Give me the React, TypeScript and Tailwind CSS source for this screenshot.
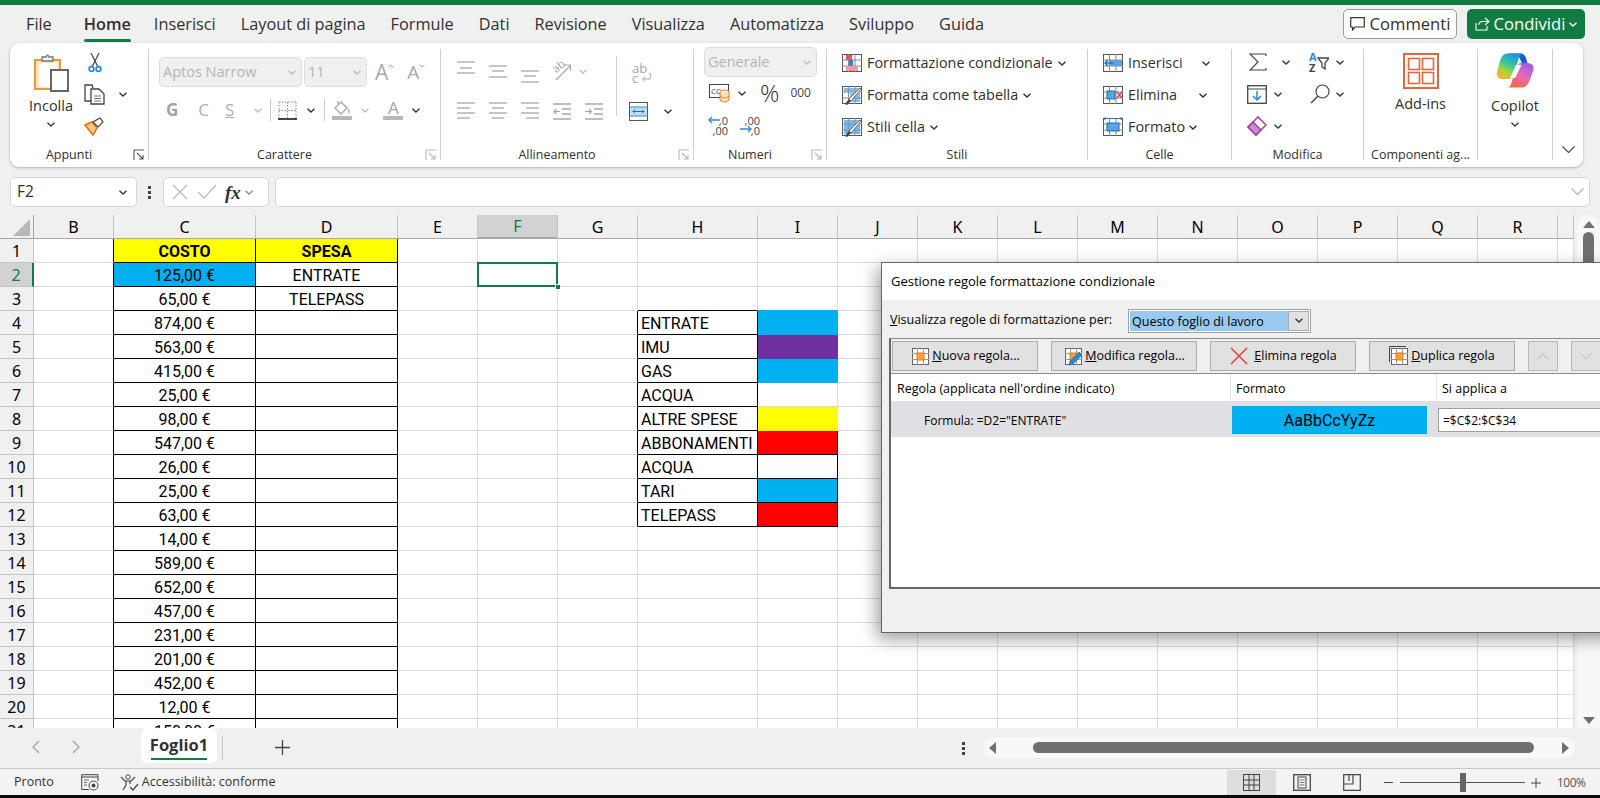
import type { ReactNode } from "react";

const columns = ["B", "C", "D", "E", "F", "G", "H", "I", "J", "K", "L", "M", "N", "O", "P", "Q", "R", ""];
const costs = ["125,00 €", "65,00 €", "874,00 €", "563,00 €", "415,00 €", "25,00 €", "98,00 €", "547,00 €", "26,00 €", "25,00 €", "63,00 €", "14,00 €", "589,00 €", "652,00 €", "457,00 €", "231,00 €", "201,00 €", "452,00 €", "12,00 €", "150,00 €"];
const legend = ["ENTRATE", "IMU", "GAS", "ACQUA", "ALTRE SPESE", "ABBONAMENTI", "ACQUA", "TARI", "TELEPASS"];
const legendFill = ["bg-[#00b0f0] border-[#00b0f0]", "bg-[#7030a0] border-[#7030a0]", "bg-[#00b0f0] border-[#00b0f0]", "bg-white border-[#dcdcdc]", "bg-[#ffff00] border-[#ffff00]", "bg-[#ff0000]", "bg-white", "bg-[#00b0f0]", "bg-[#ff0000]"];

function Chev({ className = "", color = "#333" }: { className?: string; color?: string }) {
  return (
    <svg width="8" height="5" viewBox="0 0 8 5" className={`shrink-0 ${className}`}>
      <path d="M0.5 0.7 L4 4 L7.5 0.7" fill="none" stroke={color} strokeWidth="1.3" />
    </svg>
  );
}

function Group({ width, label, launcher, children, dim }: { width: string; label?: string; launcher?: boolean; children: ReactNode; dim?: boolean }) {
  return (
    <div className={`flex h-full shrink-0 flex-col ${width}`}>
      <div className="h-[103px]">{children}</div>
      <div className={`relative h-[18px] text-center text-[12.5px] leading-[18px] text-[#303030] ${launcher ? "pr-[20px]" : ""}`}>
        {label}
        {launcher && (
          <svg width="12" height="12" viewBox="0 0 12 12" className="absolute right-[3px] top-[3px]">
            <path d="M1 11 V1 H11 M1 1 M4 4 L10 10 M10 6 V10 H6" fill="none" stroke={dim ? "#b8b8b8" : "#555"} strokeWidth="1.1" />
          </svg>
        )}
      </div>
    </div>
  );
}

function Sep() {
  return <div className="my-[6px] mb-[7px] w-px shrink-0 bg-[#d0d0d0]" />;
}

function Combo({ text, width }: { text: string; width: string }) {
  return (
    <div className={`flex h-[30px] items-center justify-between rounded-[5px] border border-[#dcdcdc] bg-[#f0f0f0] pl-[3px] pr-[5px] text-[14.5px] text-[#b4b4b4] ${width}`}>
      <span>{text}</span>
      <Chev color="#bdbdbd" />
    </div>
  );
}

function PasteIcon() {
  return (
    <svg width="35" height="39" viewBox="0 0 35 39">
      <rect x="1" y="7" width="25" height="29" fill="#fde6b8" stroke="#e8973a" strokeWidth="2" />
      <rect x="5" y="10" width="18" height="24" fill="#fff" />
      <path d="M8 8 V4 H12 Q13.5 0.5 15 4 H19 V8 Z" fill="#f4f4f4" stroke="#777" strokeWidth="1.3" />
      <rect x="17" y="17" width="17" height="21" fill="#fff" stroke="#666" strokeWidth="2" />
    </svg>
  );
}

function ScissorsIcon() {
  return (
    <svg width="14" height="21" viewBox="0 0 14 21">
      <path d="M3 1 L10 15 M11 1 L4 15" stroke="#444" strokeWidth="1.2" fill="none" />
      <circle cx="3.5" cy="17" r="2.4" fill="none" stroke="#2b88d8" strokeWidth="1.7" />
      <circle cx="10.5" cy="17" r="2.4" fill="none" stroke="#2b88d8" strokeWidth="1.7" />
    </svg>
  );
}

function CopyIcon() {
  return (
    <svg width="21" height="21" viewBox="0 0 21 21">
      <path d="M8 17 H1 V1 H8 L9 4" fill="#fff" stroke="#444" strokeWidth="1.3" />
      <path d="M7 5 H15 L20 10 V20 H7 Z" fill="#fff" stroke="#444" strokeWidth="1.3" />
      <path d="M10 12 H17 M10 14.5 H17 M10 17 H17" stroke="#777" />
    </svg>
  );
}

function BrushIcon() {
  return (
    <svg width="21" height="20" viewBox="0 0 21 20">
      <path d="M1 9 L9 19 L13 12 L8 6 Z" fill="#f9c68d" stroke="#e07a10" strokeWidth="1.6" />
      <path d="M9 6 L14 11 L19 6 L16 2 Z" fill="#fff" stroke="#444" strokeWidth="1.2" />
    </svg>
  );
}

function BorderIcon() {
  return (
    <svg width="19" height="19" viewBox="0 0 19 19">
      <path d="M1 1 H18 M1 9.5 H18 M1 1 V17 M9.5 1 V17 M18 1 V17" stroke="#8a8a8a" strokeDasharray="1.5 1.5" fill="none" />
      <path d="M0 18 H19" stroke="#444" strokeWidth="2" />
    </svg>
  );
}

function FillIcon() {
  return (
    <svg width="20" height="20" viewBox="0 0 20 20">
      <path d="M3 8 L9 2 L15 8 L9 14 Z" fill="#fff" stroke="#a8a8a8" strokeWidth="1.3" />
      <path d="M6 4 V1 M16 9 Q18 12 16.5 13" stroke="#a8a8a8" fill="none" strokeWidth="1.3" />
      <rect x="0" y="16" width="20" height="4" fill="#b8b8b8" />
    </svg>
  );
}

function FontColorIcon() {
  return (
    <div className="flex h-[20px] w-[20px] flex-col items-center">
      <span className="text-[17px] leading-[16px] text-[#a4a4a4]">A</span>
      <span className="h-[4px] w-full bg-[#b8b8b8]" />
    </div>
  );
}

function AlignIcon({ lines, short }: { lines: number[]; short?: "center" | "right" | "left" }) {
  return (
    <svg width="18" height="24" viewBox="0 0 18 24">
      {lines.map((y, i) => {
        let x1 = 0;
        let x2 = 18;
        if (short && i % 2 === 1) {
          if (short === "center") { x1 = 3; x2 = 15; }
          if (short === "right") { x1 = 5; }
          if (short === "left") { x2 = 13; }
        }
        return <path key={y} d={`M${x1} ${y} H${x2}`} stroke="#a8a8a8" strokeWidth="1.3" />;
      })}
    </svg>
  );
}

function IndentIcon({ right }: { right?: boolean }) {
  return (
    <svg width="18" height="18" viewBox="0 0 18 18">
      <path d="M0 1 H18 M0 16 H18 M9 6 H18 M9 11 H18" stroke="#a8a8a8" strokeWidth="1.3" />
      <path d={right ? "M0 8.5 H6 M4 6 L6.5 8.5 L4 11" : "M7 8.5 H1 M3.5 6 L1 8.5 L3.5 11"} stroke="#a8a8a8" fill="none" strokeWidth="1.2" />
    </svg>
  );
}

function OrientIcon() {
  return (
    <svg width="20" height="22" viewBox="0 0 20 22">
      <text x="1" y="11" fontSize="11" fill="#a8a8a8" transform="rotate(-40 6 8)">ab</text>
      <path d="M4 20 L18 6 M12 5 H18.5 V11" stroke="#a8a8a8" fill="none" strokeWidth="1.2" />
    </svg>
  );
}

function WrapIcon() {
  return (
    <div className="relative h-[20px] w-[20px] text-[13px] leading-[10px] text-[#a8a8a8]">
      ab
      <br />c
      <svg width="12" height="10" viewBox="0 0 12 10" className="absolute bottom-0 right-0">
        <path d="M8 0 H10 Q12 2 10 6 H3 M5 3.5 L2.5 6 L5 8.5" stroke="#a8a8a8" fill="none" />
      </svg>
    </div>
  );
}

function MergeIcon() {
  return (
    <svg width="19" height="19" viewBox="0 0 19 19">
      <rect x="0.5" y="0.5" width="18" height="18" fill="#fff" stroke="#555" />
      <rect x="1" y="5" width="17" height="9" fill="#bfe0f5" />
      <path d="M0 5 H19 M0 14 H19" stroke="#2b88d8" />
      <path d="M4 9.5 H15 M6 7.5 L4 9.5 L6 11.5 M13 7.5 L15 9.5 L13 11.5" stroke="#1a6fb0" fill="none" />
    </svg>
  );
}

function AccountingIcon() {
  return (
    <svg width="21" height="20" viewBox="0 0 21 20">
      <rect x="0.5" y="1.5" width="19" height="13" fill="#fff" stroke="#444" />
      <text x="2" y="11" fontSize="8" fill="#444">CC</text>
      <ellipse cx="15.5" cy="9" rx="4.5" ry="2" fill="#fff" stroke="#e07a10" />
      <path d="M11 9 V17 Q15.5 21 20 17 V9 M11 13 Q15.5 17 20 13" fill="#fbe3c4" stroke="#e07a10" />
    </svg>
  );
}

function DecimalIcon({ more }: { more?: boolean }) {
  return (
    <div className="relative h-[20px] w-[20px] text-[11px] leading-[10px] text-[#444]">
      <div className="text-right">{more ? ",00" : ",0"}</div>
      <div className="text-right">{more ? ",0" : ",00"}</div>
      <svg width="12" height="8" viewBox="0 0 12 8" className={`absolute left-0 ${more ? "top-[9px]" : "top-0"}`}>
        <path d={more ? "M0 4 H11 M8 1 L11 4 L8 7" : "M12 4 H1 M4 1 L1 4 L4 7"} stroke="#2b88d8" fill="none" strokeWidth="1.3" />
      </svg>
    </div>
  );
}

function GridBase({ children }: { children: ReactNode }) {
  return (
    <svg width="20" height="20" viewBox="0 0 20 20" className="shrink-0">
      <rect x="0.5" y="1.5" width="19" height="17" fill="#fff" stroke="#555" />
      <path d="M0 7 H20 M0 13 H20 M6.5 1 V19 M13 1 V19" stroke="#8a8a8a" />
      {children}
    </svg>
  );
}

function CondIcon() {
  return (
    <GridBase>
      <rect x="4" y="2" width="6" height="5" fill="#e8505b" />
      <rect x="7" y="7" width="4" height="6" fill="#2b88d8" />
      <rect x="4" y="13" width="12" height="5" fill="#f59aa0" />
    </GridBase>
  );
}

function TableIcon({ solid }: { solid?: boolean }) {
  return (
    <GridBase>
      <path d={solid ? "M2 3 H18 V17 H2 Z" : "M2 3 H18 V7 H2 Z M8 8 H18 V17 H8 Z"} fill="#5ba4e0" fillOpacity={solid ? 0.8 : 0.75} />
      <path d="M3 19 L7 14 L9 16 L5 20 Z" fill="#444" />
      <path d="M7 14 L18 3 L19 4 L9 16 Z" fill="#fff" stroke="#555" strokeWidth="0.8" />
    </GridBase>
  );
}

function CellsIcon({ kind }: { kind: "ins" | "del" | "fmt" }) {
  return (
    <GridBase>
      {kind === "ins" && <rect x="7" y="7" width="12" height="6" fill="#5ba4e0" />}
      {kind === "ins" && <path d="M10 10 H2 M5 7 L2 10 L5 13" stroke="#1a78c2" fill="none" strokeWidth="1.5" />}
      {kind === "del" && <rect x="4" y="6" width="8" height="8" fill="#5ba4e0" stroke="#1a6fb0" />}
      {kind === "del" && <path d="M14 7 L19 13 M19 7 L14 13" stroke="#e8404a" strokeWidth="1.5" />}
      {kind === "fmt" && <rect x="4" y="6" width="12" height="8" fill="#5ba4e0" stroke="#1a6fb0" />}
      {kind === "fmt" && <path d="M2 0 V3 M2 1.5 H18 M18 0 V3" stroke="#1a78c2" />}
    </GridBase>
  );
}

function SortIcon() {
  return (
    <svg width="20" height="21" viewBox="0 0 20 21">
      <text x="0" y="9" fontSize="11" fontWeight="700" fill="#2b88d8">A</text>
      <text x="0" y="20" fontSize="11" fontWeight="700" fill="#444">Z</text>
      <path d="M9 6 H20 L16 11 V17 L13 15 V11 Z" fill="#fff" stroke="#444" strokeWidth="1.3" />
    </svg>
  );
}

function ClearIcon() {
  return (
    <svg width="20" height="20" viewBox="0 0 20 20">
      <path d="M1 11 L11 1 L19 9 L9 19 Z" fill="#fff" stroke="#a23ca8" strokeWidth="1.5" />
      <path d="M1 11 L6 6 L14 14 L9 19 Z" fill="#c98ccc" stroke="#a23ca8" strokeWidth="1.5" />
    </svg>
  );
}

function AddInsIcon() {
  return (
    <svg width="36" height="36" viewBox="0 0 36 36">
      <rect x="1" y="1" width="34" height="34" fill="none" stroke="#e2673b" strokeWidth="2" />
      <rect x="5.5" y="5.5" width="11" height="11" fill="none" stroke="#e2673b" strokeWidth="1.6" />
      <rect x="19.5" y="5.5" width="11" height="11" fill="none" stroke="#e2673b" strokeWidth="1.6" />
      <rect x="5.5" y="19.5" width="11" height="11" fill="none" stroke="#e2673b" strokeWidth="1.6" />
      <rect x="19.5" y="19.5" width="11" height="11" fill="none" stroke="#e2673b" strokeWidth="1.6" />
    </svg>
  );
}

function CopilotIcon() {
  return (
    <svg width="38" height="37" viewBox="0 0 40 38">
      <defs>
        <linearGradient id="cpA" x1="0.7" y1="0" x2="0.2" y2="1">
          <stop offset="0" stopColor="#1f8fe8" />
          <stop offset="0.4" stopColor="#2fc6a0" />
          <stop offset="0.7" stopColor="#a6d63a" />
          <stop offset="1" stopColor="#fbb32e" />
        </linearGradient>
        <linearGradient id="cpB" x1="0.8" y1="0" x2="0.3" y2="1">
          <stop offset="0" stopColor="#9a5be8" />
          <stop offset="0.5" stopColor="#e86ab8" />
          <stop offset="1" stopColor="#f8683c" />
        </linearGradient>
      </defs>
      <path d="M12 1 H26 C30 1 32 5 33 11 L28 13 L24 4 Z" fill="#1560c8" />
      <path d="M12 1 C7 1 5 6 3.5 11 L1 21 C0 26 3 28 7 28 H13 C16 28 18 26 19 23 L24 6 C25 3 26 1 28 1 Z" fill="url(#cpA)" />
      <path d="M27 37 C32 37 35 32 36.5 27 L39.5 18 C40 13 37 11 32 11 H27 C24 11 22 13 21 16 L16 33 C15 36 14 37 12 37 Z" fill="url(#cpB)" />
      <path d="M21 13 H27 L20 27 H15 Z" fill="#fff" />
    </svg>
  );
}

function SheetGrid() {
  const rows = Array.from({ length: 21 }, (_, i) => i + 1);
  return (
    <div className="grid w-[1574px] shrink-0 grid-cols-[34px_80px_142px_142px_80px_80px_80px_120px_80px_80px_80px_80px_80px_80px_80px_80px_80px_80px_16px] grid-rows-[24px_repeat(21,24px)] overflow-hidden bg-white text-[16px] leading-[26px] text-black [font-family:Roboto,sans-serif]">
      <div className="relative border-b border-r border-[#a8a8a8] bg-[#f0f0f0]">
        <div className="absolute bottom-[2px] right-[3px] h-0 w-0 border-b-[17px] border-l-[17px] border-b-[#b8b8b8] border-l-transparent" />
      </div>
      {columns.map((c) => (
        <div
          key={c || "S"}
          className={`flex items-center justify-center border-b border-r border-b-[#a8a8a8] border-r-[#c4c4c4] text-[16px] [font-family:'Noto_Sans',sans-serif] ${
            c === "F" ? "border-b-2 border-b-[#107c41] bg-[#d2d2d2] text-[#107c41]" : "bg-[#f0f0f0]"
          }`}
        >
          {c}
        </div>
      ))}
      {rows.map((r) => (
        <Row key={r} r={r} />
      ))}
    </div>
  );
}

function Row({ r }: { r: number }) {
  const grid = "border-[#dcdcdc]";
  const black = "border-black";
  return (
    <>
      <div
        className={`flex items-center justify-center border-b border-r text-[16px] [font-family:'Noto_Sans',sans-serif] ${
          r === 2 ? "border-b-[#c4c4c4] border-r-2 border-r-[#107c41] bg-[#d2d2d2] text-[#107c41]" : "border-[#c4c4c4] bg-[#f0f0f0]"
        }`}
      >
        {r}
      </div>
      {columns.map((c) => {
        const key = `${c || "S"}${r}`;
        const inLegend = r >= 4 && r <= 12;
        if (c === "B") {
          return <div key={key} className="border-b border-r border-b-[#dcdcdc] border-r-black" />;
        }
        if (c === "C") {
          return (
            <div key={key} className={`overflow-hidden border-b border-r border-black text-center ${r === 1 ? "bg-[#ffff00] font-bold" : r === 2 ? "bg-[#00b0f0]" : ""}`}>
              {r === 1 ? "COSTO" : costs[r - 2]}
            </div>
          );
        }
        if (c === "D") {
          return (
            <div key={key} className={`overflow-hidden border-b border-r border-black text-center ${r === 1 ? "bg-[#ffff00] font-bold" : ""}`}>
              {r === 1 ? "SPESA" : r === 2 ? "ENTRATE" : r === 3 ? "TELEPASS" : ""}
            </div>
          );
        }
        if (c === "F" && r === 2) {
          return (
            <div key={key} className={`relative border-b border-r ${grid}`}>
              <div className="absolute -inset-x-px -inset-y-px z-10 border-2 border-[#107c41]" />
              <div className="absolute bottom-[-4px] right-[-4px] z-10 h-[6px] w-[6px] border border-white bg-[#107c41]" />
            </div>
          );
        }
        if (c === "G") {
          return <div key={key} className={`border-b ${grid} border-r ${inLegend ? "border-r-black" : "border-r-[#dcdcdc]"}`} />;
        }
        if (c === "H") {
          if (inLegend) {
            return (
              <div key={key} className={`overflow-hidden border-b border-r ${black} pl-[3px]`}>
                {legend[r - 4]}
              </div>
            );
          }
          return <div key={key} className={`border-b border-r ${r === 3 ? "border-b-black border-r-[#dcdcdc]" : grid}`} />;
        }
        if (c === "I") {
          if (inLegend) {
            const fill = legendFill[r - 4];
            if (r <= 8) return <div key={key} className={`border-b border-r ${fill}`} />;
            return <div key={key} className={`border-b border-r ${black} ${fill}`} />;
          }
          return <div key={key} className={`border-b border-r ${r === 3 ? "border-b-[#00b0f0] border-r-[#dcdcdc]" : grid}`} />;
        }
        return <div key={key} className={`border-b border-r ${grid}`} />;
      })}
    </>
  );
}

function DlgButton({ icon, children, width }: { icon: ReactNode; children: ReactNode; width: string }) {
  return (
    <div className={`flex h-[30px] shrink-0 items-center justify-center gap-[2px] border border-[#adadad] bg-[#e1e1e1] text-[12.5px] text-black ${width}`}>
      {icon}
      <span className="pt-px">{children}</span>
    </div>
  );
}

function RuleIcon({ kind }: { kind: "new" | "edit" | "dup" }) {
  return (
    <svg width="20" height="20" viewBox="0 0 20 20" className="shrink-0">
      {kind === "dup" && <path d="M0.5 16 V0.5 H17" fill="none" stroke="#444" />}
      <rect x="2.5" y="2.5" width="16" height="16" fill="#fff" stroke="#666" />
      <path d="M2 7.5 H19 M2 13.5 H19 M7.5 2 V19 M13.5 2 V19" stroke="#9a9a9a" />
      <rect x="7" y="7" width="7" height="7" fill="#f7a23b" stroke="#e07a10" />
      {kind === "edit" && <path d="M6 19 L7 15 L16 6 L19 9 L10 18 Z" fill="#2b88d8" stroke="#1a6fb0" strokeWidth="0.7" />}
    </svg>
  );
}

function Dialog() {
  return (
    <div className="absolute left-[881px] top-[47px] z-20 h-[371px] w-[760px] border border-r-0 border-[#666] bg-[#f0f0f0] text-[12.5px] text-black shadow-[-4px_6px_16px_rgba(0,0,0,0.38)] [font-family:'Open_Sans',sans-serif]">
      <div className="flex h-[37px] items-center bg-white pl-[9px] text-[13px]">Gestione regole formattazione condizionale</div>
      <div className="flex h-[38px] items-center pl-[8px]">
        <span className="w-[238px] pt-[2px]">
          <u>V</u>isualizza regole di formattazione per:
        </span>
        <div className="mt-[3px] flex h-[24px] w-[183px] items-stretch border border-[#a0a0a0] bg-white p-px">
          <div className="flex-1 bg-[#99c9ef] pl-[2px] leading-[22px]">Questo foglio di lavoro</div>
          <div className="flex w-[21px] items-center justify-center border border-[#adadad] bg-[#e1e1e1]">
            <Chev />
          </div>
        </div>
      </div>
      <div className="ml-[7px] h-[251px] border-b-2 border-l-2 border-t border-b-[#666] border-l-[#666] border-t-[#8c8c8c]">
        <div className="flex h-[34px] items-center gap-[13px] pl-[1px]">
          <DlgButton width="w-[146px]" icon={<RuleIcon kind="new" />}>
            <u>N</u>uova regola...
          </DlgButton>
          <DlgButton width="w-[146px]" icon={<RuleIcon kind="edit" />}>
            <u>M</u>odifica regola...
          </DlgButton>
          <DlgButton
            width="w-[146px]"
            icon={
              <svg width="20" height="20" viewBox="0 0 20 20" className="mr-[3px] shrink-0">
                <path d="M2 2 L18 18 M18 2 L2 18" stroke="#e8404a" strokeWidth="1.6" />
              </svg>
            }
          >
            <u>E</u>limina regola
          </DlgButton>
          <DlgButton width="w-[146px]" icon={<RuleIcon kind="dup" />}>
            <u>D</u>uplica regola
          </DlgButton>
          <div className="flex h-[30px] w-[30px] shrink-0 items-center justify-center border border-[#b8b8b8] bg-[#e1e1e1]">
            <svg width="12" height="7" viewBox="0 0 12 7">
              <path d="M0.5 6.5 L6 1 L11.5 6.5" fill="none" stroke="#b4b4b4" />
            </svg>
          </div>
          <div className="flex h-[30px] w-[30px] shrink-0 items-center justify-center border border-[#b8b8b8] bg-[#e1e1e1]">
            <svg width="12" height="7" viewBox="0 0 12 7">
              <path d="M0.5 0.5 L6 6 L11.5 0.5" fill="none" stroke="#b4b4b4" />
            </svg>
          </div>
        </div>
        <div className="h-[214px] border-t border-[#8c8c8c] bg-white">
          <div className="flex h-[27px] items-center">
            <div className="flex h-full w-[340px] items-center border-r border-[#e4e4e4] pl-[6px] pt-[3px]">Regola (applicata nell'ordine indicato)</div>
            <div className="flex h-full w-[206px] items-center border-r border-[#e4e4e4] pl-[5px] pt-[3px]">Formato</div>
            <div className="pl-[5px] pt-[3px]">Si applica a</div>
          </div>
          <div className="flex h-[36px] items-center bg-[#dfdfe4]">
            <div className="w-[341px] pl-[33px] pt-[3px] text-[12px]">Formula: =D2="ENTRATE"</div>
            <div className="mt-px flex h-[28px] w-[195px] items-center justify-center bg-[#00b0f0] pt-[2px] text-[16px] [font-family:Roboto,sans-serif]">AaBbCcYyZz</div>
            <div className="ml-[11px] mt-px flex h-[24px] flex-1 items-center border border-[#a0a0a0] bg-white pl-[4px] pt-[2px] text-[12px]">=$C$2:$C$34</div>
          </div>
        </div>
      </div>
    </div>
  );
}

export default function App() {
  return (
    <div className="flex h-[798px] w-[1600px] flex-col overflow-hidden bg-[#f0f0f0] text-[#303030] [font-family:'Open_Sans',sans-serif]">
      <div className="h-[5px] shrink-0 bg-[#107c41]" />

      {/* tab row */}
      <div className="flex h-[38px] shrink-0 items-center pl-[26px] text-[16.3px]">
        <span className="mr-[32px]">File</span>
        <span className="relative mr-[23px] font-semibold">
          Home
          <span className="absolute -bottom-[6px] left-0 h-[3px] w-full rounded-sm bg-[#107c41]" />
        </span>
        <div className="flex gap-[25px]">
          <span>Inserisci</span>
          <span>Layout di pagina</span>
          <span>Formule</span>
          <span>Dati</span>
          <span>Revisione</span>
          <span>Visualizza</span>
          <span>Automatizza</span>
          <span>Sviluppo</span>
          <span>Guida</span>
        </div>
        <div className="ml-auto flex gap-[10px] pr-[15px]">
          <div className="flex h-[30px] w-[114px] items-center justify-center gap-[5px] rounded-[5px] border border-[#9a9a9a] bg-white text-[16.6px]">
            <svg width="15" height="14" viewBox="0 0 15 14">
              <path d="M0.7 0.7 H14.3 V10 H5 L2.5 13 V10 H0.7 Z" fill="none" stroke="#333" strokeWidth="1.2" />
            </svg>
            Commenti
          </div>
          <div className="flex h-[30px] w-[118px] items-center justify-center gap-[4px] rounded-[5px] bg-[#107c41] text-[16.6px] text-white">
            <svg width="15" height="14" viewBox="0 0 15 14">
              <path d="M10 1 L14 4.5 L10 8 M14 4.5 H8 Q4 4.5 3.5 8 M1 6 V13 H12 V9" fill="none" stroke="#fff" strokeWidth="1.1" />
            </svg>
            Condividi
            <Chev color="#fff" />
          </div>
        </div>
      </div>

      {/* ribbon */}
      <div className="mx-[10px] flex h-[124px] w-[1573px] shrink-0 rounded-[9px] bg-white shadow-[0_1px_3px_rgba(0,0,0,0.28)]">
        <Group width="w-[138px]" label="Appunti" launcher>
          <div className="flex">
            <div className="ml-[10px] flex w-[62px] flex-col items-center pt-[10px]">
              <PasteIcon />
              <span className="mt-[4px] text-[14.5px] leading-[20px]">Incolla</span>
              <Chev className="mt-[6px]" />
            </div>
            <div className="ml-[2px] flex flex-col gap-[11px] pt-[9px]">
              <div className="ml-[4px]">
                <ScissorsIcon />
              </div>
              <div className="flex items-center">
                <CopyIcon />
                <Chev className="ml-[14px]" />
              </div>
              <BrushIcon />
            </div>
          </div>
        </Group>
        <Sep />
        <Group width="w-[291px]" label="Carattere" launcher dim>
          <div className="flex items-center pl-[10px] pt-[14px]">
            <Combo text="Aptos Narrow" width="w-[143px]" />
            <Combo text="11" width="ml-[2px] w-[63px]" />
            <span className="ml-[8px] text-[21px] leading-[30px] text-[#a8a8a8]">A</span>
            <svg width="6" height="4" viewBox="0 0 6 4" className="mb-[12px]">
              <path d="M0.5 3.5 L3 1 L5.5 3.5" fill="none" stroke="#a8a8a8" />
            </svg>
            <span className="ml-[13px] text-[19px] leading-[30px] text-[#a8a8a8]">A</span>
            <svg width="6" height="4" viewBox="0 0 6 4" className="mb-[12px]">
              <path d="M0.5 0.5 L3 3 L5.5 0.5" fill="none" stroke="#a8a8a8" />
            </svg>
          </div>
          <div className="mt-[11px] flex h-[24px] items-center pl-[10px] text-[#b0b0b0]">
            <span className="ml-[7px] text-[17px] font-bold text-[#a0a0a0]">G</span>
            <span className="ml-[20px] text-[17px]">C</span>
            <span className="ml-[16px] text-[17px] underline">S</span>
            <Chev className="ml-[20px]" color="#bdbdbd" />
            <div className="ml-[8px] h-[22px] w-px bg-[#c8c8c8]" />
            <div className="ml-[7px]">
              <BorderIcon />
            </div>
            <Chev className="ml-[10px]" />
            <div className="ml-[9px] h-[22px] w-px bg-[#c8c8c8]" />
            <div className="ml-[7px]">
              <FillIcon />
            </div>
            <Chev className="ml-[9px]" color="#bdbdbd" />
            <div className="ml-[14px]">
              <FontColorIcon />
            </div>
            <Chev className="ml-[9px]" />
          </div>
        </Group>
        <Sep />
        <Group width="w-[252px]" label="Allineamento" launcher dim>
          <div className="flex">
            <div className="w-[175px] pl-[16px] pt-[16px]">
              <div className="flex h-[24px] items-center gap-[14px]">
                <AlignIcon lines={[3, 9, 14]} short="center" />
                <AlignIcon lines={[7, 12, 18]} short="center" />
                <AlignIcon lines={[12, 17, 23]} short="center" />
                <div className="ml-[-1px]">
                  <OrientIcon />
                </div>
                <Chev className="ml-[-7px]" color="#bdbdbd" />
              </div>
              <div className="mt-[17px] flex h-[24px] items-center gap-[14px]">
                <AlignIcon lines={[3, 8, 13, 18]} short="left" />
                <AlignIcon lines={[3, 8, 13, 18]} short="center" />
                <AlignIcon lines={[3, 8, 13, 18]} short="right" />
                <IndentIcon />
                <IndentIcon right />
              </div>
            </div>
            <div className="mb-[8px] mt-[13px] w-px bg-[#d0d0d0]" />
            <div className="pl-[12px] pt-[20px]">
              <div className="ml-[3px]">
                <WrapIcon />
              </div>
              <div className="mt-[19px] flex items-center">
                <MergeIcon />
                <Chev className="ml-[16px]" />
              </div>
            </div>
          </div>
        </Group>
        <Sep />
        <Group width="w-[132px]" label="Numeri" launcher dim>
          <div className="pl-[10px] pt-[4px]">
            <Combo text="Generale" width="w-[113px]" />
          </div>
          <div className="mt-[4px] flex h-[24px] items-center pl-[15px]">
            <AccountingIcon />
            <Chev className="ml-[8px]" />
            <span className="ml-[14px] text-[24px] font-light leading-[24px]">%</span>
            <span className="ml-[11px] text-[12px] text-[#444]">000</span>
          </div>
          <div className="mt-[9px] flex h-[24px] items-center pl-[14px]">
            <DecimalIcon />
            <div className="ml-[12px]">
              <DecimalIcon more />
            </div>
          </div>
        </Group>
        <Sep />
        <Group width="w-[260px]" label="Stili">
          <div className="flex flex-col pl-[15px] pt-[4px] text-[14.4px]">
            <div className="flex h-[32px] items-center gap-[5px]">
              <CondIcon />
              <span>Formattazione condizionale</span>
              <Chev />
            </div>
            <div className="flex h-[32px] items-center gap-[5px]">
              <TableIcon />
              <span>Formatta come tabella</span>
              <Chev />
            </div>
            <div className="flex h-[32px] items-center gap-[5px]">
              <TableIcon solid />
              <span>Stili cella</span>
              <Chev />
            </div>
          </div>
        </Group>
        <Sep />
        <Group width="w-[143px]" label="Celle">
          <div className="flex flex-col pl-[15px] pt-[4px] text-[14.4px]">
            <div className="flex h-[32px] items-center gap-[5px]">
              <CellsIcon kind="ins" />
              <span className="w-[69px]">Inserisci</span>
              <Chev />
            </div>
            <div className="flex h-[32px] items-center gap-[5px]">
              <CellsIcon kind="del" />
              <span className="w-[66px]">Elimina</span>
              <Chev />
            </div>
            <div className="flex h-[32px] items-center gap-[5px]">
              <CellsIcon kind="fmt" />
              <span className="w-[56px]">Formato</span>
              <Chev />
            </div>
          </div>
        </Group>
        <Sep />
        <Group width="w-[131px]" label="Modifica">
          <div className="pt-[3px]">
            <div className="flex h-[32px] items-center pl-[17px]">
              <svg width="18" height="18" viewBox="0 0 18 18">
                <path d="M17 3 V1 H1 L9 9 L1 17 H17 V15" fill="none" stroke="#444" strokeWidth="1.2" />
              </svg>
              <Chev className="ml-[15px]" />
              <div className="ml-[19px]">
                <SortIcon />
              </div>
              <Chev className="ml-[7px]" />
            </div>
            <div className="flex h-[32px] items-center pl-[15px]">
              <svg width="20" height="19" viewBox="0 0 20 19">
                <rect x="0.7" y="0.7" width="18.6" height="17.6" fill="#fff" stroke="#444" strokeWidth="1.3" />
                <path d="M1 4 H19" stroke="#444" />
                <path d="M10 6 V15 M6 11 L10 15 L14 11" fill="none" stroke="#2b88d8" strokeWidth="1.5" />
              </svg>
              <Chev className="ml-[7px]" />
              <svg width="20" height="20" viewBox="0 0 20 20" className="ml-[28px]">
                <circle cx="12.5" cy="7.5" r="6.5" fill="none" stroke="#444" strokeWidth="1.2" />
                <path d="M8 12 L1 19" stroke="#444" strokeWidth="1.4" />
              </svg>
              <Chev className="ml-[6px]" />
            </div>
            <div className="flex h-[32px] items-center pl-[15px]">
              <ClearIcon />
              <Chev className="ml-[7px]" />
            </div>
          </div>
        </Group>
        <Sep />
        <Group width="w-[113px]" label="Componenti ag...">
          <div className="flex flex-col items-center pt-[10px]">
            <AddInsIcon />
            <span className="mt-[5px] text-[14.5px] leading-[20px]">Add-ins</span>
          </div>
        </Group>
        <Sep />
        <Group width="w-[74px]">
          <div className="flex flex-col items-center pt-[9px]">
            <CopilotIcon />
            <span className="mt-[7px] text-[14.5px] leading-[20px]">Copilot</span>
            <Chev className="mt-[6px]" />
          </div>
        </Group>
        <Sep />
        <div className="flex flex-1 items-end justify-center pb-[13px]">
          <svg width="13" height="8" viewBox="0 0 13 8">
            <path d="M0.5 0.5 L6.5 6.5 L12.5 0.5" fill="none" stroke="#444" strokeWidth="1.1" />
          </svg>
        </div>
      </div>

      {/* formula bar */}
      <div className="ml-[10px] mt-[10px] flex h-[30px] shrink-0 items-center">
        <div className="flex h-full w-[127px] items-center justify-between rounded-[5px] border border-[#d8d8d8] bg-white pl-[6px] pr-[9px] text-[15.5px]">
          F2
          <Chev />
        </div>
        <div className="ml-[10px] flex w-[5px] flex-col items-center gap-[2px]">
          <span className="h-[3px] w-[3px] bg-[#444]" />
          <span className="h-[3px] w-[3px] bg-[#444]" />
          <span className="h-[3px] w-[3px] bg-[#444]" />
        </div>
        <div className="ml-[11px] flex h-full w-[106px] items-center rounded-[5px] border border-[#d8d8d8] bg-white pl-[8px]">
          <svg width="16" height="16" viewBox="0 0 16 16">
            <path d="M1 1 L15 15 M15 1 L1 15" stroke="#b8b8b8" strokeWidth="1.2" />
          </svg>
          <svg width="20" height="16" viewBox="0 0 20 16" className="ml-[9px]">
            <path d="M1 8 L7 14 L19 1" fill="none" stroke="#b8b8b8" strokeWidth="1.2" />
          </svg>
          <span className="ml-[8px] text-[19px] font-bold italic leading-none text-[#333] [font-family:'Liberation_Serif',serif]">fx</span>
          <Chev className="ml-[4px]" color="#888" />
        </div>
        <div className="ml-[6px] flex h-full w-[1315px] items-center justify-end rounded-[5px] border border-[#d8d8d8] bg-white pr-[5px]">
          <svg width="13" height="8" viewBox="0 0 13 8">
            <path d="M0.5 0.5 L6.5 6.5 L12.5 0.5" fill="none" stroke="#b0b0b0" strokeWidth="1.1" />
          </svg>
        </div>
      </div>

      {/* sheet */}
      <div className="relative mt-[8px] flex h-[513px] shrink-0 overflow-hidden">
        <SheetGrid />
        <div className="ml-[3px] flex w-[23px] flex-col items-center justify-between rounded-t-xl bg-[#f8f8f8] pb-[4px] pt-[6px]">
          <div className="flex flex-col items-center">
            <div className="h-0 w-0 border-x-[6px] border-b-[7px] border-x-transparent border-b-[#707070]" />
            <div className="mt-[4px] h-[120px] w-[11px] rounded-full bg-[#707070]" />
          </div>
          <div className="h-0 w-0 border-x-[6px] border-t-[7px] border-x-transparent border-t-[#707070]" />
        </div>
        <Dialog />
      </div>

      {/* sheet tabs */}
      <div className="flex h-[40px] shrink-0 items-start">
        <svg width="10" height="14" viewBox="0 0 10 14" className="ml-[31px] mt-[12px]">
          <path d="M8 1 L2 7 L8 13" fill="none" stroke="#a0a0a0" strokeWidth="1.2" />
        </svg>
        <svg width="10" height="14" viewBox="0 0 10 14" className="ml-[30px] mt-[12px]">
          <path d="M2 1 L8 7 L2 13" fill="none" stroke="#a0a0a0" strokeWidth="1.2" />
        </svg>
        <div className="ml-[60px] flex h-[35px] w-[76px] flex-col items-center rounded-md bg-white pt-[6px]">
          <span className="text-[16.5px] font-bold leading-[22px] text-[#333]">Foglio1</span>
          <span className="mt-[2px] h-[2px] w-[56px] bg-[#107c41]" />
        </div>
        <div className="ml-[5px] mt-[8px] h-[24px] w-px bg-[#c8c8c8]" />
        <svg width="15" height="15" viewBox="0 0 15 15" className="ml-[52px] mt-[12px]">
          <path d="M7.5 0 V15 M0 7.5 H15" stroke="#444" strokeWidth="1.3" />
        </svg>
        <div className="ml-[672px] mt-[14px] flex flex-col gap-[2px]">
          <span className="h-[3px] w-[3px] bg-[#444]" />
          <span className="h-[3px] w-[3px] bg-[#444]" />
          <span className="h-[3px] w-[3px] bg-[#444]" />
        </div>
        <div className="ml-[18px] mt-[9px] flex h-[21px] w-[592px] items-center rounded-full bg-[#f8f8f8]">
          <div className="ml-[6px] h-0 w-0 border-y-[6px] border-r-[7px] border-y-transparent border-r-[#707070]" />
          <div className="ml-[37px] h-[11px] w-[501px] rounded-full bg-[#707070]" />
          <div className="ml-[28px] h-0 w-0 border-y-[6px] border-l-[7px] border-y-transparent border-l-[#707070]" />
        </div>
      </div>

      {/* status bar */}
      <div className="flex h-[27px] shrink-0 items-center border-t border-[#c8c8c8] bg-[#f3f3f3] pl-[14px] pt-px text-[12.5px] text-[#333]">
        <span>Pronto</span>
        <svg width="18" height="17" viewBox="0 0 18 17" className="ml-[27px]">
          <path d="M0.7 0.7 H17 V3 H0.7 Z M0.7 3 V15.5 H8 M17 3 V7" fill="none" stroke="#444" />
          <path d="M3 6 H8 M3 8.5 H6 M3 11 H6" stroke="#666" />
          <circle cx="12.5" cy="11.5" r="4.5" fill="#fff" stroke="#444" />
          <circle cx="12.5" cy="11.5" r="2" fill="#444" />
        </svg>
        <svg width="19" height="18" viewBox="0 0 19 18" className="ml-[21px]">
          <circle cx="8" cy="3" r="2.2" fill="none" stroke="#444" />
          <path d="M1 3 L5 7 H11 L15 3 M6 7 V11 L3 16 M10 7 V10 M10 13 L13 16 L18 10" fill="none" stroke="#444" strokeWidth="1.2" />
        </svg>
        <span className="ml-[3px]">Accessibilità: conforme</span>
        <div className="ml-auto flex h-full items-center">
          <div className="flex h-full w-[49px] items-center justify-center bg-[#dedede]">
            <svg width="17" height="17" viewBox="0 0 17 17">
              <rect x="0.5" y="0.5" width="16" height="16" fill="none" stroke="#444" />
              <path d="M6 0 V17 M11 0 V17 M0 6 H17 M0 11 H17" stroke="#444" />
            </svg>
          </div>
          <svg width="18" height="17" viewBox="0 0 18 17" className="ml-[17px]">
            <rect x="0.7" y="0.7" width="16.6" height="15.6" fill="none" stroke="#444" strokeWidth="1.3" />
            <rect x="5" y="3" width="8" height="11" fill="none" stroke="#444" />
            <path d="M6.5 6 H11.5 M6.5 8.5 H11.5 M6.5 11 H11.5" stroke="#777" />
          </svg>
          <svg width="18" height="17" viewBox="0 0 18 17" className="ml-[32px]">
            <path d="M0.7 0.7 H17.3 V16.3 H0.7 Z M0.7 10 H10 V0.7 M6 0.7 V7" fill="none" stroke="#444" strokeWidth="1.2" />
          </svg>
          <span className="ml-[23px] h-px w-[9px] bg-[#444]" />
          <div className="relative ml-[7px] h-px w-[125px] bg-[#555]">
            <div className="absolute left-[60px] top-[-9px] h-[19px] w-[6px] bg-[#666]" />
          </div>
          <svg width="10" height="10" viewBox="0 0 10 10" className="ml-[6px]">
            <path d="M5 0 V10 M0 5 H10" stroke="#444" />
          </svg>
          <span className="ml-[16px] mr-[12px] w-[31px] text-[12px] tracking-[-0.5px] text-[#555]">100%</span>
        </div>
      </div>

      <div className="h-[3px] shrink-0 bg-[#0a0a0a]" />
    </div>
  );
}
